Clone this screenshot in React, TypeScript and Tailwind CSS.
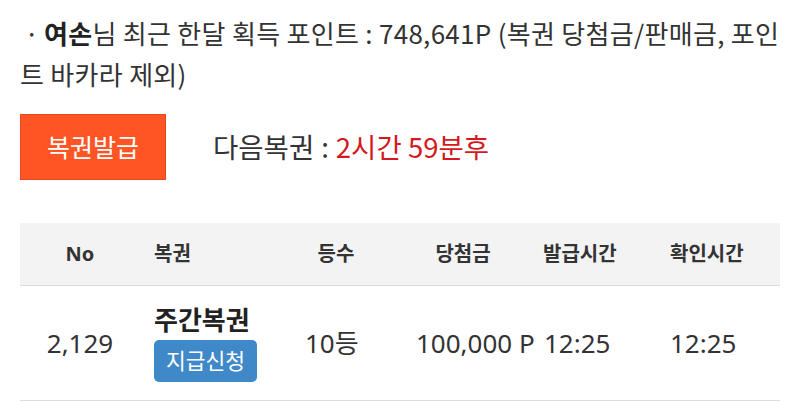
import type { FC } from "react";

const cjk = { fontFamily: '"Noto Sans CJK KR", "Noto Sans", sans-serif' };
const table = { fontFamily: '"Noto Sans", "Noto Sans CJK KR", sans-serif' };

const cols = "grid grid-cols-[120px_150px_112px_128px_126px_124px]";

const App: FC = () => {
  return (
    <div className="min-h-screen bg-white text-[#333]" style={cjk}>
      {/* 포인트 안내 */}
      <div className="pl-5 pr-[8px] pt-[12px]">
        <p className="text-[26px] leading-[41px] tracking-[0.3px]">
          <span className="inline-block w-[24px] text-center">·</span>
          <b className="font-bold text-[#222]">여손</b>님 최근 한달 획득 포인트 : 748,641P (복권 당첨금/판매금, 포인트 바카라 제외)
        </p>
      </div>

      {/* 발급 버튼 + 다음복권 */}
      <div className="mt-[20px] flex items-center gap-[47px] px-5">
        <button className="h-[66px] w-[146px] border border-[#e2491c] bg-[#ff5424] text-[25px] text-white">
          복권발급
        </button>
        <p className="text-[27.5px]">
          다음복권<span className="mx-[7px]">:</span>
          <span className="text-[#d41920]">2시간 59분후</span>
        </p>
      </div>

      {/* 목록 */}
      <div className="mx-5 mt-[43px]" style={table}>
        <div className={`${cols} h-[63px] items-center border-b border-[#dcdcdc] bg-[#f3f3f3] text-[20px] font-bold text-[#333]`}>
          <div className="text-center">No</div>
          <div className="pl-[14px]">복권</div>
          <div className="pr-[20px] text-center">등수</div>
          <div className="pr-[6px] text-center">당첨금</div>
          <div className="whitespace-nowrap pl-[13px]">발급시간</div>
          <div className="whitespace-nowrap pl-[14px]">확인시간</div>
        </div>
        <div className={`${cols} h-[115px] items-center border-b border-[#dcdcdc] text-[26px]`}>
          <div className="text-center">2,129</div>
          <div className="flex flex-col items-start pl-[14px]">
            <span className="text-[26px] font-bold leading-[32px] text-[#222]">주간복권</span>
            <span className="mt-[4px] rounded-[5px] bg-[#3f89c9] px-[12px] py-[4px] text-[21.5px] leading-[34px] text-white">
              지급신청
            </span>
          </div>
          <div className="pl-[15px]">10등</div>
          <div className="whitespace-nowrap pl-[14px]">100,000 P</div>
          <div className="pl-[14px]">12:25</div>
          <div className="pl-[14px]">12:25</div>
        </div>
      </div>
    </div>
  );
};

export default App;
